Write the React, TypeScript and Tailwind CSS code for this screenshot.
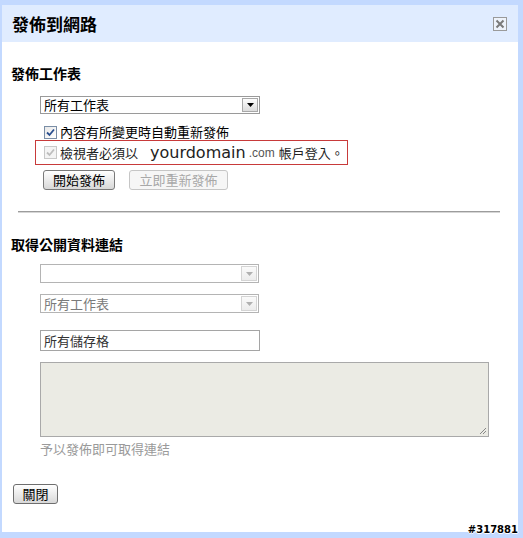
import React from "react";

const Arrow = ({ disabled }: { disabled?: boolean }) => (
  <span
    className={
      "absolute right-[1px] top-[1px] bottom-[1px] w-[16px] border flex items-center justify-center bg-linear-to-b " +
      (disabled
        ? "border-[#d4d4d4] from-[#fafafa] to-[#ececec]"
        : "border-[#a8a8a8] from-[#fdfdfd] to-[#dcdcdc]")
    }
  >
    <svg width="7" height="4" viewBox="0 0 7 4">
      <path d="M0 0 H7 L3.5 4 Z" fill={disabled ? "#b0b0b0" : "#000"} />
    </svg>
  </span>
);

const Check = ({ disabled }: { disabled?: boolean }) => (
  <span
    className={
      "w-[13px] h-[13px] border flex items-center justify-center shrink-0 " +
      (disabled ? "border-[#c8c8c8] bg-[#f4f4f4]" : "border-[#7a8ea6] bg-linear-to-br from-[#e8e8e8] to-white")
    }
  >
    <svg width="9" height="9" viewBox="0 0 9 9">
      <path
        d="M1 4.5 L3.5 7 L8 1.5"
        fill="none"
        stroke={disabled ? "#bdbdbd" : "#2a4f8f"}
        strokeWidth="1.8"
      />
    </svg>
  </span>
);

export default function App() {
  return (
    <div className="relative w-[523px] h-[538px] bg-[#c3d9ff] pt-[5px] pl-[2px] pr-[5px] pb-[6px] font-['Noto_Sans_CJK_TC','Noto_Sans',sans-serif] text-black">
      <div className="bg-white h-full flex flex-col">
        {/* header */}
        <div className="h-[37px] bg-[#e0ecff] flex items-center justify-between pl-[10px] pr-[11px] shrink-0">
          <span className="text-[17px] leading-[20px] font-bold">發佈到網路</span>
          <span className="w-[14px] h-[14px] border border-[#9a9a9a] flex items-center justify-center bg-[#eef3fb]">
            <svg width="10" height="10" viewBox="0 0 10 10">
              <path d="M1.5 1.5 L8.5 8.5 M8.5 1.5 L1.5 8.5" stroke="#7a7a7a" strokeWidth="2" />
            </svg>
          </span>
        </div>

        <div className="px-[9px] flex flex-col">
          <div className="mt-[23px] text-[14px] leading-[16px] font-bold">發佈工作表</div>

          <div className="ml-[29px] flex flex-col">
            {/* select 1 */}
            <div className="relative mt-[15px] w-[220px] h-[18px] border border-[#9a9a9a] bg-white flex items-center pl-[3px] text-[13px] leading-[16px]">
              所有工作表
              <Arrow />
            </div>

            {/* checkbox 1 */}
            <div className="mt-[11px] h-[14px] flex items-center gap-[3px] pl-[4px] text-[13px] leading-[14px]">
              <Check />
              <span>內容有所變更時自動重新發佈</span>
            </div>

            {/* red box */}
            <div className="-ml-[5px] mt-[1px] w-[313px] h-[25px] border border-[#c83a3a] flex items-center pl-[8px] text-[13px] leading-[16px]">
              <Check disabled />
              <span className="ml-[3px] text-[#222]">檢視者必須以</span>
              <span className="ml-[12px] font-['DejaVu_Sans',sans-serif] text-[16px] leading-[18px] text-[#222]">yourdomain</span>
              <span className="ml-[3px] font-['Liberation_Sans',sans-serif] text-[12px] text-[#555]">.com</span>
              <span className="ml-[4px] text-[#222]">帳戶登入。</span>
            </div>

            {/* buttons */}
            <div className="mt-[5px] flex items-center gap-[14px] pl-[3px]">
              <span className="w-[72px] h-[20px] rounded-[3px] border border-[#7a7a7a] bg-linear-to-b from-white to-[#d8d8d8] flex items-center justify-center text-[13px] leading-[16px]">
                開始發佈
              </span>
              <span className="w-[99px] h-[20px] rounded-[3px] border border-[#c6c6c6] bg-[#f6f6f6] flex items-center justify-center text-[13px] leading-[16px] text-[#a8a8a8]">
                立即重新發佈
              </span>
            </div>
          </div>

          {/* divider */}
          <div className="mt-[21px] ml-[7px] mr-[9px] h-[2px] border-t border-[#9c9c9c] bg-[#d6d6d6]" />

          <div className="mt-[23px] text-[14px] leading-[16px] font-bold">取得公開資料連結</div>

          <div className="ml-[29px] flex flex-col">
            <div className="relative mt-[12px] w-[219px] h-[19px] border border-[#b4b4b4] bg-white">
              <Arrow disabled />
            </div>
            <div className="relative mt-[11px] w-[219px] h-[19px] border border-[#b4b4b4] bg-white flex items-center pl-[3px] text-[13px] leading-[16px] text-[#7a7a7a]">
              所有工作表
              <Arrow disabled />
            </div>
            <div className="mt-[17px] w-[220px] h-[21px] border border-[#a5a5a5] bg-white flex items-center pl-[3px] text-[13px] leading-[16px] text-[#333]">
              所有儲存格
            </div>
            <div className="relative mt-[11px] w-[449px] h-[75px] border border-[#a9a9a9] bg-[#ebebe4]">
              <svg className="absolute right-[1px] bottom-[1px]" width="9" height="9" viewBox="0 0 9 9">
                <path d="M8 2 L2 8 M8 5 L5 8" stroke="#888" strokeWidth="1" />
              </svg>
            </div>
            <div className="mt-[5px] text-[13px] leading-[14px] text-[#9a9a9a]">予以發佈即可取得連結</div>
          </div>

          <div className="mt-[28px] ml-[2px]">
            <span className="w-[45px] h-[20px] rounded-[3px] border border-[#6e6e6e] bg-linear-to-b from-white to-[#d8d8d8] flex items-center justify-center text-[13px] leading-[16px]">
              關閉
            </span>
          </div>
        </div>
      </div>

      <span className="absolute right-[5px] bottom-[3px] font-['DejaVu_Sans',sans-serif] font-bold text-[10px] leading-[10px] text-black [text-shadow:1px_0_#fff,-1px_0_#fff,0_1px_#fff,0_-1px_#fff]">
        #317881
      </span>
    </div>
  );
}
